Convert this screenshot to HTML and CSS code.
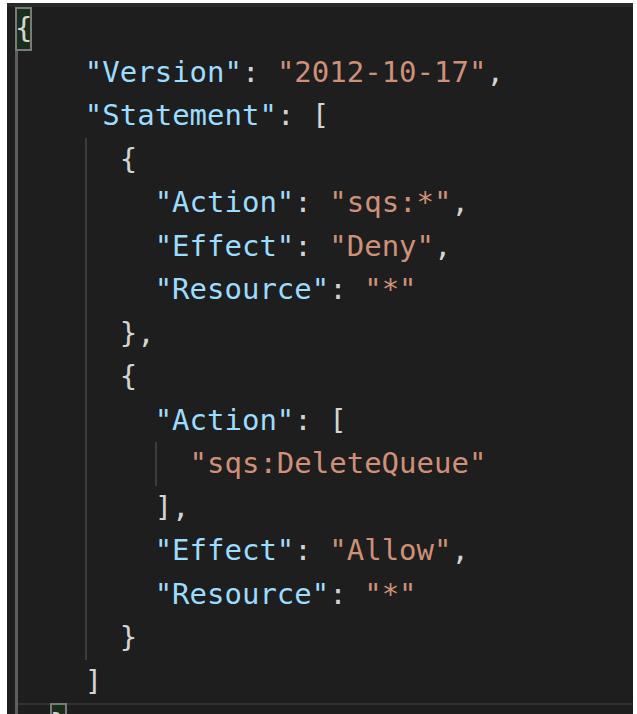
FILE: index.html
```html
<!DOCTYPE html>
<html>
<head>
<meta charset="utf-8">
<link rel="stylesheet" href="styles.css">
</head>
<body>
<div class="editor">
  <div class="shade"></div>
  <div class="code">
    <div class="line"><span class="match">{</span></div>
    <div class="line"><span class="g4 act"></span><span class="k">"Version"</span><span class="p">: </span><span class="s">"2012-10-17"</span><span class="p">,</span></div>
    <div class="line"><span class="g4 act"></span><span class="k">"Statement"</span><span class="p">: [</span></div>
    <div class="line"><span class="g4 act"></span><span class="g2"></span><span class="p">{</span></div>
    <div class="line"><span class="g4 act"></span><span class="g4"></span><span class="k">"Action"</span><span class="p">: </span><span class="s">"sqs:*"</span><span class="p">,</span></div>
    <div class="line"><span class="g4 act"></span><span class="g4"></span><span class="k">"Effect"</span><span class="p">: </span><span class="s">"Deny"</span><span class="p">,</span></div>
    <div class="line"><span class="g4 act"></span><span class="g4"></span><span class="k">"Resource"</span><span class="p">: </span><span class="s">"*"</span></div>
    <div class="line"><span class="g4 act"></span><span class="g2"></span><span class="p">},</span></div>
    <div class="line"><span class="g4 act"></span><span class="g2"></span><span class="p">{</span></div>
    <div class="line"><span class="g4 act"></span><span class="g4"></span><span class="k">"Action"</span><span class="p">: [</span></div>
    <div class="line"><span class="g4 act"></span><span class="g4"></span><span class="g2"></span><span class="s">"sqs:DeleteQueue"</span></div>
    <div class="line"><span class="g4 act"></span><span class="g4"></span><span class="p">],</span></div>
    <div class="line"><span class="g4 act"></span><span class="g4"></span><span class="k">"Effect"</span><span class="p">: </span><span class="s">"Allow"</span><span class="p">,</span></div>
    <div class="line"><span class="g4 act"></span><span class="g4"></span><span class="k">"Resource"</span><span class="p">: </span><span class="s">"*"</span></div>
    <div class="line"><span class="g4 act"></span><span class="g2"></span><span class="p">}</span></div>
    <div class="line"><span class="g4 act"></span><span class="p">]</span></div>
    <div class="line current"><span class="g2 act"></span><span class="match">}</span></div>
  </div>
</div>
</body>
</html>
```
FILE: styles.css
```css
html, body {
  margin: 0;
  padding: 0;
  background: #ffffff;
}

.editor {
  margin: 3px 4px 0 7px;
  height: 711px;
  background: #1e1e1e;
  overflow: hidden;
}

.shade {
  height: 4px;
  background: #2a2a2a;
}

.code {
  padding-left: 8px;
  font-family: "DejaVu Sans Mono", "Liberation Mono", monospace;
  font-size: 29px;
  color: #d4d4d4;
}

.line {
  height: 43.5px;
  line-height: 43.5px;
  white-space: pre;
}

.current {
  box-shadow: inset 0 2px 0 #303030;
}

.g4, .g2 {
  display: inline-block;
  height: 43.5px;
  vertical-align: top;
  background: linear-gradient(#3c3c3c, #3c3c3c) no-repeat 0 0 / 2px 100%;
}

.g4 { width: 4ch; }
.g2 { width: 2ch; }

.g4.act, .g2.act {
  background: linear-gradient(#5e5e5e, #5e5e5e) no-repeat 0 0 / 3px 100%;
}

.match {
  display: inline-block;
  width: 1ch;
  height: 43.5px;
  vertical-align: top;
  background: #1b2d1b;
  outline: 2px solid #7a7a7a;
  outline-offset: -2px;
  color: #d4d4d4;
}

.k { color: #9cdcfe; }
.s { color: #ce9178; }
.p { color: #d4d4d4; }
```
